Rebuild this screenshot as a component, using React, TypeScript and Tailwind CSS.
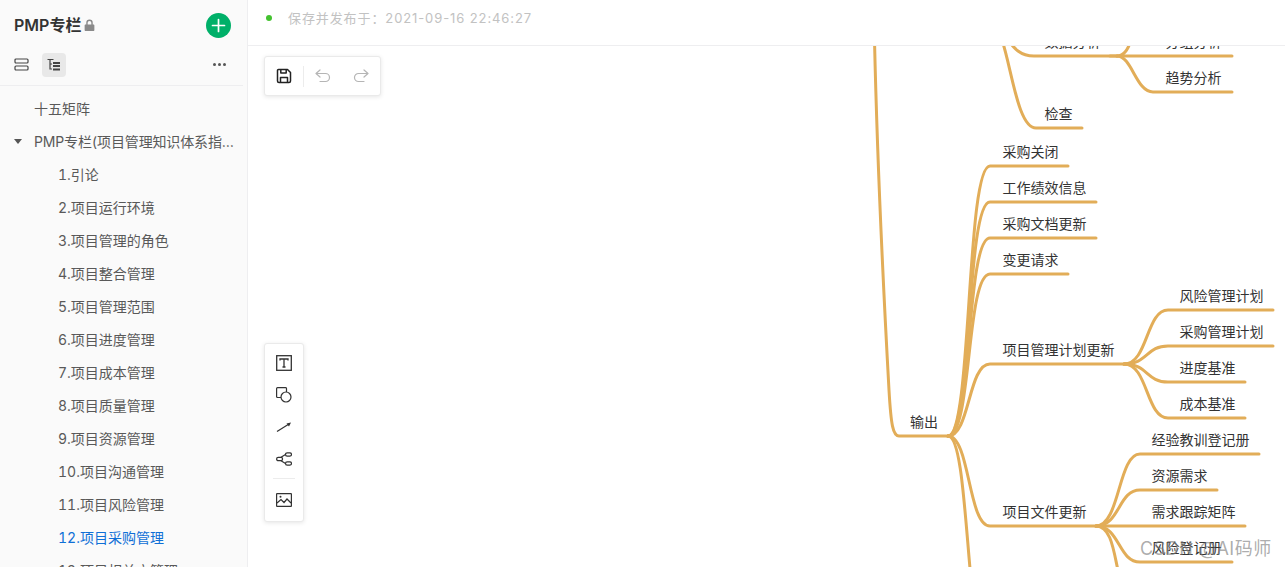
import React from "react";

const font = { fontFamily: '"Inter","Noto Sans CJK SC",sans-serif' };

const items = [
  "1.引论", "2.项目运行环境", "3.项目管理的角色", "4.项目整合管理", "5.项目管理范围", "6.项目进度管理",
  "7.项目成本管理", "8.项目质量管理", "9.项目资源管理", "10.项目沟通管理", "11.项目风险管理", "12.项目采购管理", "13.项目相关方管理",
];

const paths = [
  "M874.5 40 C877 150 884 300 889 390 C891 425 893 436 899 436 L952 436",
  "M1002 40 C1012 70 1018 128 1036 128 L1082 128",
  "M1008 40 C1014 48 1020 56 1034 56 L1117 56",
  "M1117 56 C1124 56 1128 50 1131 40",
  "M1110 56 L1232 56",
  "M1117 56 C1132 56 1136 92 1153 92 L1232 92",
  "M948 436 C972 436 966 166 990 166 L1068 166",
  "M948 436 C972 436 966 202 990 202 L1096 202",
  "M948 436 C972 436 966 238 990 238 L1096 238",
  "M948 436 C972 436 966 274 990 274 L1068 274",
  "M948 436 C970 436 968 364 990 364 L1130 364",
  "M948 436 C970 436 968 526 990 526 L1102 526",
  "M948 436 C962 436 965 520 972 590",
  "M1124 364 C1148 364 1146 310 1168 310 L1273 310",
  "M1124 364 C1148 364 1146 346 1168 346 L1273 346",
  "M1124 364 C1148 364 1146 382 1168 382 L1245 382",
  "M1124 364 C1148 364 1146 418 1168 418 L1245 418",
  "M1096 526 C1120 526 1118 454 1140 454 L1259 454",
  "M1096 526 C1120 526 1118 490 1140 490 L1217 490",
  "M1096 526 L1245 526",
  "M1096 526 C1120 526 1118 562 1140 562 L1232 562",
  "M1096 526 C1116 526 1114 570 1124 590",
];

const labels: [string, number, number][] = [
  ["数据分析", 1044.5, 42], ["分组分析", 1165.5, 42], ["趋势分析", 1165.5, 78], ["检查", 1044.5, 114],
  ["采购关闭", 1002.5, 152], ["工作绩效信息", 1002.5, 188], ["采购文档更新", 1002.5, 224], ["变更请求", 1002.5, 260],
  ["项目管理计划更新", 1002.5, 350], ["风险管理计划", 1179.5, 296], ["采购管理计划", 1179.5, 332], ["进度基准", 1179.5, 368], ["成本基准", 1179.5, 404],
  ["输出", 910, 422], ["项目文件更新", 1002.5, 512], ["经验教训登记册", 1151.5, 440], ["资源需求", 1151.5, 476], ["需求跟踪矩阵", 1151.5, 512], ["风险登记册", 1151.5, 548],
];

function MindMap() {
  return (
    <div className="absolute left-0 top-0 w-[1285px] h-[567px] pointer-events-none">
      <svg width="1285" height="567" viewBox="0 0 1285 567" fill="none" className="absolute left-0 top-0">
        {paths.map((d, i) => (
          <path key={i} d={d} stroke="#e2ad58" strokeWidth="3" strokeLinecap="round" />
        ))}
      </svg>
      {labels.map(([t, x, y]) => (
        <span
          key={t}
          className="absolute text-[14px] leading-[20px] text-[#333] whitespace-nowrap -translate-y-1/2"
          style={{ left: x, top: y }}
        >
          {t}
        </span>
      ))}
    </div>
  );
}

function Sidebar() {
  return (
    <aside className="relative z-10 w-[248px] h-full shrink-0 bg-[#fafafa] border-r border-[#eeeef0] overflow-hidden">
      <div className="flex items-center h-[50px] pl-[14px] pr-4">
        <span className="text-[16px] font-semibold text-[#333]">PMP专栏</span>
        <svg width="13" height="13" viewBox="0 0 12 12" className="ml-[2px]" fill="#8a8a8a">
          <path d="M3 5V3.500a3 3 0 0 1 6 0V5h.6c.5 0 .9.4.9.9v4.200c0 .5-.4.9-.9.9H2.400c-.5 0-.9-.4-.9-.9V5.900c0-.5.4-.9.9-.9H3zm1.300 0h3.400V3.500a1.700 1.700 0 0 0-3.400 0V5z" />
        </svg>
        <button className="ml-auto w-[25px] h-[25px] rounded-full bg-[#00b069] flex items-center justify-center">
          <svg width="15" height="15" viewBox="0 0 15 15" stroke="#fff" strokeWidth="1.700" strokeLinecap="round">
            <path d="M7.500 1.500v12M1.500 7.500h12" />
          </svg>
        </button>
      </div>
      <div className="flex items-center h-[36px] pl-[10px] pr-[14px] border-b border-[#eeeef0] mr-1 pb-[6px]">
        <div className="w-6 h-6 flex items-center justify-center -ml-[1px] mr-[1px]">
          <svg width="15" height="13" viewBox="0 0 15 13" fill="none" stroke="#444" strokeWidth="1.200">
            <rect x="1" y="1" width="13" height="4" rx="1" />
            <rect x="1" y="8" width="13" height="4" rx="1" />
          </svg>
        </div>
        <div className="ml-2 w-6 h-6 rounded bg-[#e8e8e8] flex items-center justify-center">
          <svg width="14" height="14" viewBox="0 0 14 14" fill="none" stroke="#444" strokeWidth="1.200">
            <path d="M0.500 1.500h6M3 1.500v10M3 6h2M3 11h2" />
            <path d="M6 5h7M6 8h7M6 11.500h7" strokeWidth="1.800" />
          </svg>
        </div>
        <div className="ml-auto flex gap-[2px] mr-[3px]">
          <span className="w-[3px] h-[3px] rounded-full bg-[#555]" />
          <span className="w-[3px] h-[3px] rounded-full bg-[#555]" />
          <span className="w-[3px] h-[3px] rounded-full bg-[#555]" />
        </div>
      </div>
      <nav className="text-[14px] text-[#595959] pt-[6px] tabular-nums">
        <div className="h-[33px] flex items-center pl-[34px]">十五矩阵</div>
        <div className="h-[33px] flex items-center pl-[14px] pr-[12px]">
          <span className="w-0 h-0 border-x-[4px] border-x-transparent border-t-[5px] border-t-[#555] mr-[12px] shrink-0" />
          <span className="truncate tracking-[-0.15px]">PMP专栏(项目管理知识体系指南)</span>
        </div>
        {items.map((t, i) => (
          <div key={t} className={"h-[33px] flex items-center pl-[58px] " + (i === 11 ? "text-[#0f6fd6]" : "")}>
            {t}
          </div>
        ))}
      </nav>
    </aside>
  );
}

function TopBar() {
  return (
    <div className="relative z-10 h-[46px] bg-white border-b border-[#eeeef0] flex items-start pl-[18px] pt-[9px]">
      <span className="w-[6px] h-[6px] mt-[6px] rounded-full bg-[#43c22f]" />
      <span className="ml-[16px] text-[13px] leading-[18px] tracking-[0.9px] text-[#c2c2c2]">保存并发布于：2021-09-16 22:46:27</span>
    </div>
  );
}

function SaveBar() {
  return (
    <div className="flex items-center w-[117px] h-[40px] ml-4 mt-[10px] rounded-[3px] bg-white border border-[#eaeaea] shadow-[0_1px_4px_rgba(0,0,0,0.1)] relative z-10">
      <div className="w-[38px] flex justify-center">
        <svg width="16" height="16" viewBox="0 0 16 16" fill="none" stroke="#222" strokeWidth="1.500" strokeLinejoin="round">
          <path d="M2.500 1.500h9l3 3v8.500a1.500 1.500 0 0 1-1.500 1.500H3a1.500 1.500 0 0 1-1.500-1.500V2.500a1 1 0 0 1 1-1z" />
          <path d="M4.800 1.500v3.500h5.400V1.500M4.500 14.500V9.500h7v5" />
        </svg>
      </div>
      <div className="w-px h-[21px] bg-[#ececec]" />
      <div className="w-[38px] flex justify-center">
        <svg width="16" height="14" viewBox="0 0 16 14" fill="none" stroke="#b5b5b5" strokeWidth="1.200" strokeLinecap="round" strokeLinejoin="round">
          <path d="M5 1 1 4.500 5 8M1 4.500h9.500a4 4 0 0 1 0 8H5" />
        </svg>
      </div>
      <div className="w-[38px] flex justify-center">
        <svg width="16" height="14" viewBox="0 0 16 14" fill="none" stroke="#b5b5b5" strokeWidth="1.200" strokeLinecap="round" strokeLinejoin="round">
          <path d="M11 1l4 3.500L11 8M15 4.500H5.500a4 4 0 0 0 0 8H11" />
        </svg>
      </div>
    </div>
  );
}

function ToolBar() {
  return (
    <div className="absolute left-4 top-[343px] z-10 w-[40px] h-[179px] flex flex-col items-center rounded-[3px] bg-white border border-[#eaeaea] shadow-[0_1px_4px_rgba(0,0,0,0.1)]">
      <div className="h-[32px] mt-[3px] flex items-center">
        <svg width="16" height="16" viewBox="0 0 16 16" fill="none" stroke="#333" strokeWidth="1.300">
          <rect x="0.700" y="0.700" width="14.600" height="14.600" />
          <path d="M4 5.500V4h8v1.500M8 4v8M6.500 12h3" />
        </svg>
      </div>
      <div className="h-[32px] flex items-center">
        <svg width="16" height="16" viewBox="0 0 16 16" fill="none" stroke="#333" strokeWidth="1.200">
          <path d="M5 10.500H1.500a1 1 0 0 1-.9-.9V1.500a1 1 0 0 1 .9-.9h8a1 1 0 0 1 1 .9V5" />
          <circle cx="10" cy="10" r="5" />
        </svg>
      </div>
      <div className="h-[32px] flex items-center">
        <svg width="16" height="12" viewBox="0 0 16 12" fill="none" stroke="#333" strokeWidth="1.200">
          <path d="M1 10.500 13 3" />
          <path d="M15 1.500 10.500 2.500l2.500 3z" fill="#333" stroke="none" />
        </svg>
      </div>
      <div className="h-[32px] flex items-center">
        <svg width="16" height="16" viewBox="0 0 16 16" fill="none" stroke="#333" strokeWidth="1.200" className="translate-y-px">
          <rect x="9.500" y="1.800" width="6" height="3.400" rx="1.700" />
          <rect x="9.500" y="10.800" width="6" height="3.400" rx="1.700" />
          <rect x="0.600" y="6.300" width="6" height="3.400" rx="1.700" />
          <path d="M5 6.300 9.500 3.500M5 9.700 9.500 12.500" />
        </svg>
      </div>
      <div className="w-[22px] h-px bg-[#ececec] mt-[4px]" />
      <div className="h-[42px] flex items-center">
        <svg width="16" height="14" viewBox="0 0 16 14" fill="none" stroke="#333" strokeWidth="1.200">
          <rect x="0.600" y="0.600" width="14.800" height="12.800" rx="0.500" />
          <path d="M1 10 5 6.500l3 3 3-3.500 4 4" />
          <circle cx="4.500" cy="3.800" r="1" fill="#333" stroke="none" />
        </svg>
      </div>
    </div>
  );
}

export default function App() {
  return (
    <div className="relative w-[1285px] h-[567px] overflow-hidden bg-white flex" style={font}>
      <MindMap />
      <Sidebar />
      <main className="relative flex-1 min-w-0">
        <TopBar />
        <SaveBar />
        <ToolBar />
      </main>
      <span className="absolute z-20 left-[1140px] top-[535px] text-[18px] leading-[28px] tracking-[0.55px] text-[rgba(120,120,120,0.62)] whitespace-nowrap">
        CSDN @AI码师
      </span>
    </div>
  );
}
